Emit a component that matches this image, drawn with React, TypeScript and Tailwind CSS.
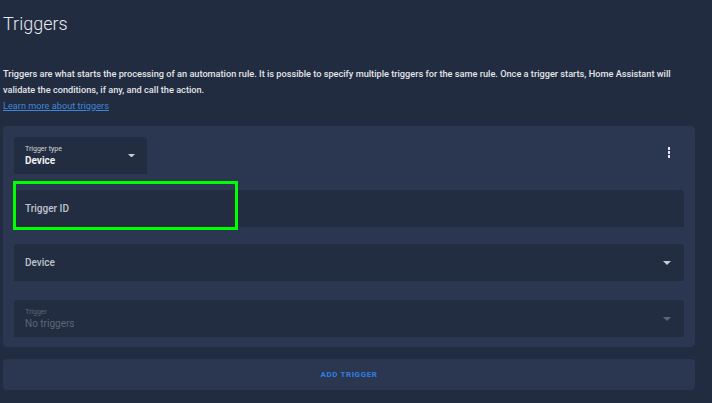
import React from "react";

const font = { fontFamily: "Roboto, 'Liberation Sans', sans-serif" };

function Caret({ dim, small }: { dim?: boolean; small?: boolean }) {
  return (
    <svg
      width={small ? 7 : 8}
      height={small ? 3.5 : 4}
      viewBox="0 0 8 4"
      className={dim ? "text-[#5d6679]" : "text-[#c7cbd3]"}
    >
      <path d="M0 0h8L4 4z" fill="currentColor" />
    </svg>
  );
}

export default function App() {
  return (
    <div className="min-h-[403px] w-[712px] bg-[#222c41] text-white" style={font}>
      <div className="pl-[3px] pr-[17px] pt-[13px]">
        <h1 className="text-[18px] font-light leading-[22px] text-[#e8eaee]">Triggers</h1>

        <div className="mt-[31px] text-[9.2px] font-medium leading-[16px] text-[#e3e5e9]">
          Triggers are what starts the processing of an automation rule. It is possible to specify multiple triggers for the same rule. Once a trigger starts, Home Assistant will
          validate the conditions, if any, and call the action.
        </div>
        <a className="block text-[9.2px] leading-[16px] text-[#3f86d8] underline">Learn more about triggers</a>

        {/* trigger card */}
        <div className="mt-[12px] rounded-[4px] bg-[#2b3650] px-[11px] pb-[10px] pt-[11px]">
          <div className="flex items-start justify-between">
            <div className="flex h-[37px] w-[133px] items-center justify-between rounded-t-[4px] bg-[#232d42] pl-[11px] pr-[12px]">
              <div className="flex flex-col">
                <span className="text-[7px] leading-[9px] text-[#d6d9df]">Trigger type</span>
                <span className="text-[10px] font-bold leading-[13px] text-[#eef0f3]">Device</span>
              </div>
              <Caret small />
            </div>
            <div className="mr-[14px] mt-[10px] flex flex-col gap-[1.5px]">
              <span className="h-[2.5px] w-[2.5px] bg-[#e4e6ea]" />
              <span className="h-[2.5px] w-[2.5px] bg-[#e4e6ea]" />
              <span className="h-[2.5px] w-[2.5px] bg-[#e4e6ea]" />
            </div>
          </div>

          <div className="relative mt-[16px] flex h-[37px] items-center rounded-t-[4px] bg-[#232d42] pl-[11px]">
            <span className="text-[10px] font-medium text-[#bfc4cc]">Trigger ID</span>
            <div className="absolute left-[-1px] top-[-9px] h-[49px] w-[225px] border-[3px] border-[#00ff00]" />
          </div>

          <div className="mt-[17px] flex h-[37px] items-center justify-between rounded-t-[4px] bg-[#232d42] pl-[11px] pr-[13px]">
            <span className="text-[10px] font-medium text-[#bfc4cc]">Device</span>
            <Caret />
          </div>

          <div className="mt-[19px] flex h-[37px] items-center justify-between rounded-t-[4px] bg-[#232d42] pl-[11px] pr-[13px]">
            <div className="flex flex-col">
              <span className="text-[7px] leading-[9px] text-[#5d6679]">Trigger</span>
              <span className="text-[10px] leading-[13px] text-[#5d6679]">No triggers</span>
            </div>
            <Caret dim />
          </div>
        </div>

        <button className="mt-[12px] flex h-[31px] w-full items-center justify-center rounded-[4px] bg-[#2b3650] text-[8px] font-bold tracking-[0.6px] text-[#2f80e3]">
          ADD TRIGGER
        </button>
      </div>
    </div>
  );
}
